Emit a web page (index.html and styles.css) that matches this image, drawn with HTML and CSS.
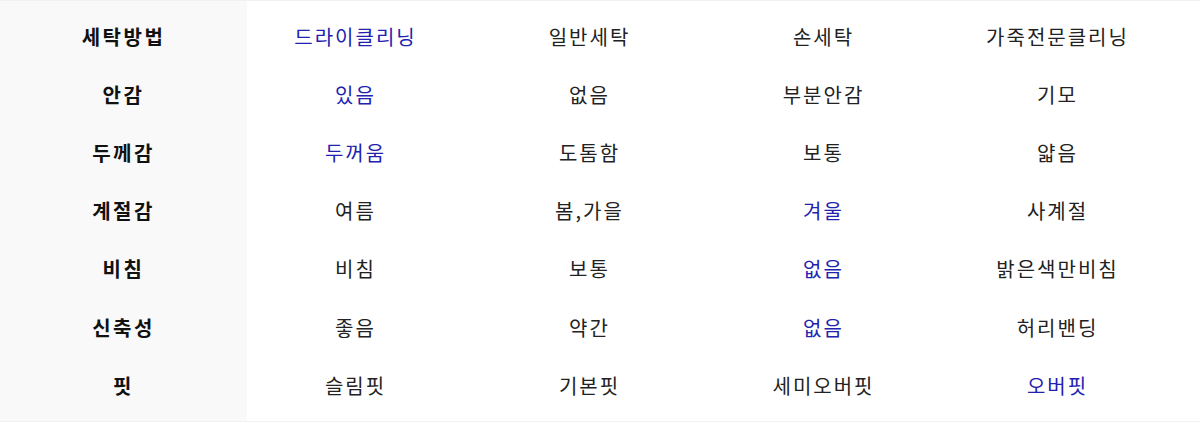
FILE: index.html
```html
<!DOCTYPE html>
<html lang="ko">
<head>
<meta charset="utf-8">
<title>상품 정보</title>
<link rel="stylesheet" href="styles.css">
</head>
<body>
<div class="spec">
  <div class="row">
    <div class="head">세탁방법</div>
    <div class="cell on">드라이클리닝</div>
    <div class="cell">일반세탁</div>
    <div class="cell">손세탁</div>
    <div class="cell">가죽전문클리닝</div>
  </div>
  <div class="row">
    <div class="head">안감</div>
    <div class="cell on">있음</div>
    <div class="cell">없음</div>
    <div class="cell">부분안감</div>
    <div class="cell">기모</div>
  </div>
  <div class="row">
    <div class="head">두께감</div>
    <div class="cell on">두꺼움</div>
    <div class="cell">도톰함</div>
    <div class="cell">보통</div>
    <div class="cell">얇음</div>
  </div>
  <div class="row">
    <div class="head">계절감</div>
    <div class="cell">여름</div>
    <div class="cell">봄,가을</div>
    <div class="cell on">겨울</div>
    <div class="cell">사계절</div>
  </div>
  <div class="row">
    <div class="head">비침</div>
    <div class="cell">비침</div>
    <div class="cell">보통</div>
    <div class="cell on">없음</div>
    <div class="cell">밝은색만비침</div>
  </div>
  <div class="row">
    <div class="head">신축성</div>
    <div class="cell">좋음</div>
    <div class="cell">약간</div>
    <div class="cell on">없음</div>
    <div class="cell">허리밴딩</div>
  </div>
  <div class="row">
    <div class="head">핏</div>
    <div class="cell">슬림핏</div>
    <div class="cell">기본핏</div>
    <div class="cell">세미오버핏</div>
    <div class="cell on">오버핏</div>
  </div>
</div>
</body>
</html>
```

FILE: styles.css
```css
html, body {
  margin: 0;
  padding: 0;
  background: #ffffff;
}

body {
  font-family: "Noto Sans CJK KR", "Noto Sans", sans-serif;
  color: #222222;
}

.spec {
  border-top: 1px solid #f2f2f2;
  border-bottom: 1px solid #f2f2f2;
  padding: 6px 0 7px;
  background: linear-gradient(to right, #f9f9f9 0, #f9f9f9 247px, #ffffff 247px);
}

.row {
  display: grid;
  grid-template-columns: 247px repeat(4, 234px);
  height: 58.2px;
  align-items: center;
}

.head {
  text-align: center;
  font-size: 20px;
  font-weight: 700;
  color: #111111;
  letter-spacing: 2.5px;
}

.cell {
  text-align: center;
  padding-right: 17px;
  font-size: 20px;
  letter-spacing: 2px;
  color: #222222;
}

.cell.on {
  color: #2222b0;
}
```
